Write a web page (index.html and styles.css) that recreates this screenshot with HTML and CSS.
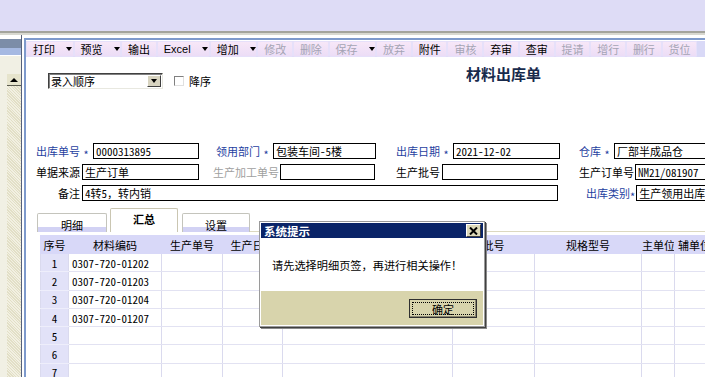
FILE: index.html
```html
<!DOCTYPE html>
<html lang="zh-CN">
<head>
<meta charset="UTF-8">
<title>材料出库单</title>
<link rel="stylesheet" href="styles.css">
</head>
<body>
<div class="topbar"></div>
<div class="rule"></div>
<div class="workarea">
    <div class="side">
        <div class="side-head"></div>
        <div class="side-head2"></div>
        <div class="side-body">
            <div class="scrollbar">
                <div class="scroll-up"><span class="tri-up"></span></div>
                <div class="scroll-track"></div>
            </div>
        </div>
    </div>
    <div class="gap"></div>
    <div class="main">
        <div class="toolbar">
            <div class="tb-btn drop">打印<i class="caret"></i></div>
            <div class="tb-btn drop">预览<i class="caret"></i></div>
            <div class="tb-btn">输出</div>
            <div class="tb-btn excel">Excel<i class="caret"></i></div>
            <div class="tb-btn drop">增加<i class="caret"></i></div>
            <div class="tb-btn off">修改</div>
            <div class="tb-btn off">删除</div>
            <div class="tb-btn drop off">保存<i class="caret"></i></div>
            <div class="tb-btn off">放弃</div>
            <div class="tb-btn">附件</div>
            <div class="tb-btn off">审核</div>
            <div class="tb-btn">弃审</div>
            <div class="tb-btn">查审</div>
            <div class="tb-btn off">提请</div>
            <div class="tb-btn off">增行</div>
            <div class="tb-btn off">删行</div>
            <div class="tb-btn off">货位</div>
        </div>
        <div class="form">
            <div class="head-row">
                <div class="sort">
                    <div class="select"><span class="select-text">录入顺序</span><span class="select-btn"><i class="caret"></i></span></div>
                    <span class="check"></span><span class="check-label">降序</span>
                </div>
                <h1 class="title">材料出库单</h1>
            </div>
            <div class="fields">
                <div class="field"><span class="lbl req w44">出库单号</span><span class="star">*</span><input class="box w106" value="0000313895"></div>
                <div class="field pad3"><span class="lbl req w44">领用部门</span><span class="star">*</span><input class="box w103" value="包装车间-5楼"></div>
                <div class="field"><span class="lbl req w44">出库日期</span><span class="star">*</span><input class="box w107" value="2021-12-02"></div>
                <div class="field"><span class="lbl req w22">仓库</span><span class="star">*</span><input class="box wrest" value="厂部半成品仓"></div>

                <div class="field"><span class="lbl w44">单据来源</span><input class="box sp w117" value="生产订单"></div>
                <div class="field"><span class="lbl dim w66">生产加工单号</span><input class="box w95" value=""></div>
                <div class="field"><span class="lbl w44">生产批号</span><input class="box sp w116" value=""></div>
                <div class="field"><span class="lbl w55">生产订单号</span><input class="box wrest" value="NM21/081907"></div>

                <div class="field span3 pad22"><span class="lbl w22">备注</span><input class="box sp w476" value="4转5，转内销"></div>
                <div class="field pad7"><span class="lbl req w44">出库类别</span><span class="star">*</span><input class="box wrest" value="生产领用出库"></div>
            </div>
            <div class="tabs">
                <div class="tab w70">明细</div>
                <div class="tab active">汇总</div>
                <div class="tab">设置</div>
                <div class="tab-rest"></div>
            </div>
            <table class="grid">
                <colgroup>
                    <col class="c28"><col class="c93"><col class="c61"><col class="c60"><col class="c170"><col class="c82"><col class="c107"><col class="c33"><col class="c40">
                </colgroup>
                <tr><th>序号</th><th>材料编码</th><th>生产单号</th><th>生产日期</th><th></th><th>批号</th><th>规格型号</th><th>主单位</th><th>辅单位</th></tr>
                <tr><td class="num">1</td><td>0307-720-01202</td><td></td><td></td><td></td><td></td><td></td><td></td><td></td></tr>
                <tr><td class="num">2</td><td>0307-720-01203</td><td></td><td></td><td></td><td></td><td></td><td></td><td></td></tr>
                <tr><td class="num">3</td><td>0307-720-01204</td><td></td><td></td><td></td><td></td><td></td><td></td><td></td></tr>
                <tr><td class="num">4</td><td>0307-720-01207</td><td></td><td></td><td></td><td></td><td></td><td></td><td></td></tr>
                <tr><td class="num">5</td><td></td><td></td><td></td><td></td><td></td><td></td><td></td><td></td></tr>
                <tr><td class="num">6</td><td></td><td></td><td></td><td></td><td></td><td></td><td></td><td></td></tr>
                <tr><td class="num">7</td><td></td><td></td><td></td><td></td><td></td><td></td><td></td><td></td></tr>
            </table>
        </div>
    </div>
</div>
<div class="dialog">
    <div class="dialog-title">
        <span>系统提示</span>
        <span class="dialog-close"><svg width="9" height="8" viewBox="0 0 9 8"><path d="M1 0.5 L8 7.5 M8 0.5 L1 7.5" stroke="#000" stroke-width="2"/></svg></span>
    </div>
    <div class="dialog-body">请先选择明细页签，再进行相关操作！</div>
    <div class="dialog-foot">
        <div class="dialog-btn"><span>确定</span></div>
    </div>
</div>
</body>
</html>
```
FILE: styles.css
```css
* { box-sizing: border-box; }
body { margin: 0; width: 705px; height: 377px; overflow: hidden; position: relative; background: #fff; font-family: "Noto Sans CJK SC", "Noto Sans", sans-serif; font-size: 11px; color: #000; }

.topbar { height: 31px; background: #dedcf6; }
.rule { height: 4px; background: #d8d8d0; border-top: 2px solid #a4a49c; }
.workarea { display: flex; height: 342px; }

/* left panel with scrollbar */
.side { width: 22px; padding-top: 4px; border-right: 1px solid #56607a; display: flex; flex-direction: column; }
.side-head { height: 9px; background: #7c8da8; }
.side-head2 { height: 8px; background: #a6b9e2; border-bottom: 1px solid #fff; }
.side-body { flex: 1; display: flex; background: #f1f0e4; }
.scrollbar { margin: 18px 0 0 7px; width: 14px; display: flex; flex-direction: column; }
.scroll-up { height: 12px; background: #e6e4cc; border-bottom: 1px solid #5c5c50; display: flex; align-items: center; justify-content: center; }
.tri-up { width: 0; height: 0; border-left: 4px solid transparent; border-right: 4px solid transparent; border-bottom: 4px solid #000; }
.scroll-track { flex: 1; background: repeating-linear-gradient(45deg, #e2dfc6 0 1px, #f2f0e2 1px 2px); }
.gap { width: 2px; }

.main { flex: 1; min-width: 0; margin-top: 3px; border-top: 2px solid #7e9acc; border-left: 2px solid #7e9acc; display: flex; flex-direction: column; }

/* toolbar */
.toolbar { margin-top: 1px; height: 21px; background: #d9d9f7; display: flex; white-space: nowrap; }
.tb-btn { flex: none; width: 35.7px; padding-left: 7px; display: flex; align-items: center; background: linear-gradient(#f8e8f8, #ebdcf6); box-shadow: inset 0 0 0 1px #e6e0fa; border-radius: 2px; }
.tb-btn.drop { width: 47.5px; }
.tb-btn.excel { width: 53px; font-family: "Liberation Sans", sans-serif; }
.tb-btn.off { color: #a4a4b4; }
.caret { display: inline-block; width: 0; height: 0; border-left: 3.5px solid transparent; border-right: 3.5px solid transparent; border-top: 4px solid #000; margin-left: 11px; }

/* form */
.form { flex: 1; }
.head-row { display: flex; align-items: flex-start; height: 32px; }
.sort { margin: 16px 0 0 22px; display: flex; align-items: center; height: 16px; }
.select { width: 115px; height: 16px; display: flex; align-items: center; border: 1px solid; border-color: #404040 #e8e8e0 #e8e8e0 #404040; box-shadow: inset 1px 1px 0 #808080; }
.select-text { flex: 1; padding-left: 2px; }
.select-btn { width: 14px; height: 12px; margin-right: 1px; display: flex; align-items: center; justify-content: center; background: #d8d4c0; border: 1px solid; border-color: #fff #404040 #404040 #fff; }
.select-btn .caret { margin-left: 0; }
.check { width: 10px; height: 10px; margin-left: 11px; background: #fff; border: 1px solid; border-color: #808080 #e0e0e0 #e0e0e0 #808080; }
.check-label { margin-left: 5px; }
.title { margin: 8px 0 0 255px; font-size: 15px; line-height: 18px; font-weight: bold; color: #182a4c; white-space: nowrap; }

.fields { margin: 54px 0 0 10px; display: grid; grid-template-columns: 177px 183px 183px 160px; grid-auto-rows: 16px; row-gap: 5px; }
.field { display: flex; align-items: center; white-space: nowrap; }
.field.span3 { grid-column: span 3; }
.pad3 { padding-left: 3px; }
.pad7 { padding-left: 7px; }
.pad22 { padding-left: 22px; }
.lbl { flex: none; }
.lbl.req, .star { color: #1f3f9f; }
.lbl.dim { color: #a0a0a0; }
.star { width: 12px; height: 16px; line-height: 23px; text-align: center; }
.w22 { width: 22px; }
.w44 { width: 44px; }
.w55 { width: 55px; }
.w66 { width: 66px; }
.box { flex: none; height: 16px; margin: 0 0 0 1px; padding: 0 2px; border: 1px solid #000; font-family: "Noto Sans Mono CJK SC", "Noto Sans CJK SC", sans-serif; font-size: 11px; color: #000; background: #fff; outline: none; }
.box.sp { margin-left: 2px; }
.w95 { width: 95px; }
.w103 { width: 103px; }
.w106 { width: 106px; }
.w107 { width: 107px; }
.w116 { width: 116px; }
.w117 { width: 117px; }
.w476 { width: 476px; }
.wrest { width: 110px; }

/* tabs */
.tabs { margin: 7px 0 0 11px; height: 24px; display: flex; align-items: flex-end; }
.tab { width: 68px; height: 19px; margin-right: 4px; padding-top: 4px; line-height: 14px; text-align: center; border: 1px solid #c4c4bc; border-bottom: none; border-radius: 2px 2px 0 0; background: linear-gradient(#fff 0, #fff 13px, #d2d2f4 13px); }
.tab.w70 { width: 70px; margin-right: 3px; }
.tab.active { height: 24px; padding-top: 3px; background: #fff; border-color: #cac6b2; font-weight: bold; }
.tab-rest { flex: 1; margin-left: -4px; height: 2px; border-bottom: 1px solid #dcd8c0; }

/* detail grid */
.grid { margin: 3px 0 0 14px; width: 674px; border-collapse: collapse; table-layout: fixed; font-family: "Noto Sans Mono CJK SC", "Noto Sans CJK SC", sans-serif; }
.c28 { width: 28px; }
.c33 { width: 33px; }
.c40 { width: 40px; }
.c60 { width: 60px; }
.c61 { width: 61px; }
.c82 { width: 82px; }
.c93 { width: 93px; }
.c107 { width: 107px; }
.c170 { width: 170px; }
.grid th { height: 18px; padding: 0; background: #d8d8f8; font-weight: normal; font-family: "Noto Sans CJK SC", sans-serif; white-space: nowrap; overflow: hidden; text-overflow: clip; border: 1px solid #d8d8f8; }
.grid td { height: 18.3px; padding: 0 0 0 3px; border: 1px solid #dadaee; border-top-color: #e2e2f2; border-bottom-color: #e2e2f2; white-space: nowrap; overflow: hidden; }
.grid td.num { padding: 0; text-align: center; background: #e2e2f8; border-color: #eeeefb #dadaee; }

/* message box */
.dialog { position: absolute; left: 259px; top: 221px; width: 226px; height: 106px; padding: 1px; background: #fff; border: 1px solid #9a9a9a; box-shadow: 1px 1px 0 #404040, 2px 2px 0 #8a8a8a; display: flex; flex-direction: column; }
.dialog-title { height: 15px; padding: 0 2px 0 3px; background: #0a2468; color: #fff; font-weight: bold; font-size: 11.5px; display: flex; align-items: center; justify-content: space-between; }
.dialog-close { width: 15px; height: 13px; display: flex; align-items: center; justify-content: center; background: #dcd8b8; border: 1px solid; border-color: #fff #404040 #404040 #fff; }
.dialog-body { height: 53px; padding-left: 11px; display: flex; align-items: center; font-size: 11.2px; white-space: nowrap; }
.dialog-foot { flex: 1; padding-right: 6px; background: #d8d4ac; display: flex; align-items: center; justify-content: flex-end; }
.dialog-btn { width: 68px; height: 19px; border: 1px solid #303030; background: #d8d4ac; box-shadow: inset -1px -1px 0 #8a8670; }
.dialog-btn span { display: block; margin: 2px; height: 13px; line-height: 12px; text-align: center; border: 1px dotted #000; }
```
